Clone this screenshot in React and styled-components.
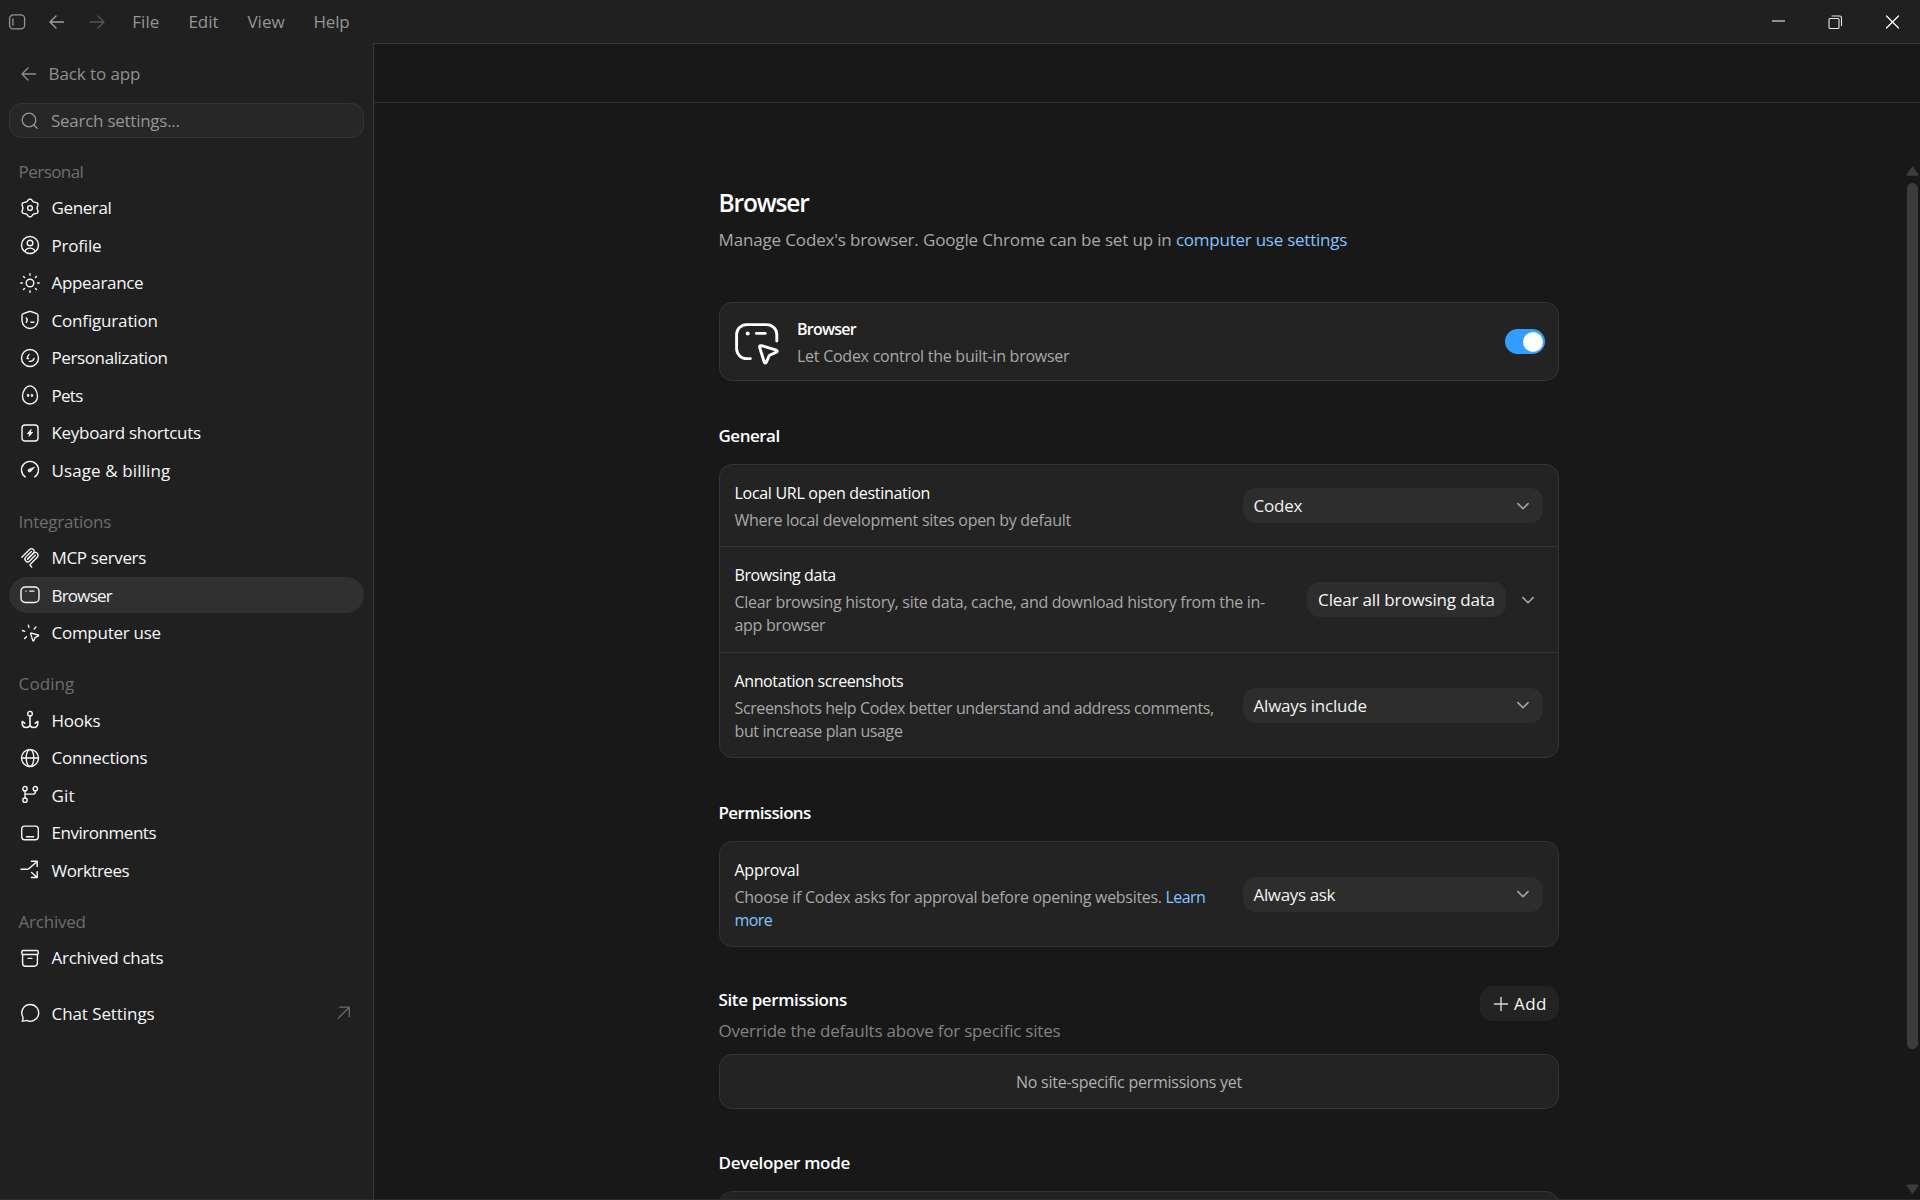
import React from "react";
import styled, { createGlobalStyle } from "styled-components";

const GlobalStyle = createGlobalStyle`
  *, *::before, *::after { box-sizing: border-box; }
  body { margin: 0; background: #202020; overflow: hidden; }
  button, input { font: inherit; color: inherit; }
`;

/* ---------- window shell ---------- */

const Window = styled.div`
  display: flex;
  flex-direction: column;
  width: 1920px;
  height: 1200px;
  overflow: hidden;
  background: #202020;
  border-bottom: 1px solid #2b2b2b;
  color: #f7f7f7;
  font-family: "Open Sans", "Noto Sans", sans-serif;
  font-size: 17px;
  line-height: 26px;
  font-kerning: normal;
`;

const TitleBar = styled.header`
  display: flex;
  flex: none;
  align-items: center;
  height: 43px;
  padding-left: 7px;
  color: #959595;
`;

const NavIcons = styled.div`
  display: flex;
  gap: 20px;
  padding-top: 1px;
`;

const Menu = styled.nav`
  display: flex;
  gap: 28.9px;
  padding: 1px 0 0 25.2px;
`;

const MenuItem = styled.span`
  letter-spacing: ${(p) => p.$ls || 0}px;
`;

const WindowControls = styled.div`
  display: flex;
  margin-left: auto;
`;

const ControlButton = styled.span`
  display: flex;
  align-items: center;
  justify-content: center;
  width: 57px;
  height: 43px;
`;

const Body = styled.div`
  display: flex;
  flex: 1;
  min-height: 0;
`;

const Svg = styled.svg`
  display: block;
  flex: none;
  overflow: visible;
  fill: none;
  stroke: ${(p) => p.$color || "currentColor"};
  stroke-width: ${(p) => p.$w || 1.4};
  stroke-linecap: round;
  stroke-linejoin: round;
`;

/* ---------- sidebar ---------- */

const Sidebar = styled.aside`
  flex: none;
  width: 373px;
  padding: 16px 9px 0;
`;

const BackLink = styled.div`
  display: flex;
  align-items: center;
  gap: 9.6px;
  height: 29px;
  padding-left: 10px;
  margin-bottom: 15px;
  color: #8f8f8f;
  letter-spacing: -0.1px;
`;

const SearchBox = styled.div`
  display: flex;
  align-items: center;
  gap: 11px;
  height: 35px;
  padding-left: 10px;
  border: 1px solid #353535;
  border-radius: 12.5px;
  background: #272727;
  color: #959595;
  letter-spacing: -0.26px;
`;

const GroupLabel = styled.div`
  display: flex;
  align-items: flex-end;
  height: 51.5px;
  padding: 0 0 6px 9.6px;
  color: #6d6d6d;
  line-height: 24px;
  letter-spacing: ${(p) => p.$ls || 0}px;
`;

const Group = styled.div`
  display: flex;
  flex-direction: column;
  gap: 1.5px;
`;

const Item = styled.div`
  display: flex;
  align-items: center;
  gap: 11.5px;
  height: 36px;
  padding: 0 13px 0 11px;
  margin-top: ${(p) => p.$top || 0}px;
  border-radius: 18px;
  background: ${(p) => (p.$active ? "#303030" : "transparent")};
`;

const ItemText = styled.span`
  flex: 1;
  padding-top: 1px;
  letter-spacing: ${(p) => p.$ls || 0}px;
`;

/* ---------- main panel ---------- */

const Main = styled.main`
  display: flex;
  flex: 1;
  flex-direction: column;
  min-width: 0;
  border: solid #383838;
  border-width: 1px 0 0 1px;
  background: #181818;
`;

const MainHeader = styled.div`
  flex: none;
  height: 59px;
  border-bottom: 1px solid #323232;
`;

const Scroll = styled.div`
  display: flex;
  flex: 1;
  min-height: 0;
`;

const Content = styled.div`
  flex: 1;
  min-width: 0;
  padding-top: 83px;
  overflow: hidden;
`;

const Column = styled.div`
  display: flex;
  flex-direction: column;
  width: 840px;
  margin: 0 auto;
`;

const ScrollTrack = styled.div`
  display: flex;
  flex: none;
  flex-direction: column;
  align-items: center;
  width: 16px;
  padding: 63px 0 5px 1px;
`;

const Thumb = styled.div`
  width: 11px;
  height: 866px;
  margin: 7px 0 auto;
  border-radius: 6px;
  background: #3c3c3c;
`;

const PageTitle = styled.h1`
  margin: 0 0 0 -0.5px;
  font-size: 24.5px;
  font-weight: 600;
  line-height: 34px;
  letter-spacing: -1.15px;
  color: #fff;
`;

const PageIntro = styled.p`
  margin: 7px 0 49px -0.5px;
  color: #a8a8a8;
  letter-spacing: -0.15px;
`;

const Link = styled.a`
  color: #83c3ff;
  letter-spacing: ${(p) => (p.$ls === undefined ? "inherit" : p.$ls + "px")};
`;

const Heading = styled.h2`
  margin: ${(p) => (p.$top === undefined ? 41.5 : p.$top)}px 0 ${(p) => (p.$bottom === undefined ? 15.5 : p.$bottom)}px -0.5px;
  font-size: 17px;
  font-weight: 600;
  line-height: 26px;
  letter-spacing: ${(p) => p.$ls || 0}px;
  color: #fff;
`;

const Card = styled.section`
  flex: none;
  border: 1px solid #343434;
  border-radius: 13px;
  background: #232323;
`;

const Row = styled.div`
  display: flex;
  box-sizing: content-box;
  align-items: center;
  justify-content: space-between;
  height: ${(p) => p.$h}px;
  padding: 0 ${(p) => (p.$right === undefined ? 15 : p.$right)}px 0 14.5px;
  &:not(:first-child) {
    border-top: 1px solid #343434;
  }
`;

const RowText = styled.div`
  align-self: flex-start;
  width: ${(p) => p.$w || 488}px;
  padding-top: 16.5px;
`;

const RowTitle = styled.div`
  font-size: 16px;
  font-weight: ${(p) => (p.$bold ? 600 : 400)};
  line-height: 22px;
  letter-spacing: ${(p) => p.$ls || 0}px;
  color: #fff;
`;

const RowDesc = styled.div`
  margin-top: 5px;
  font-size: 16px;
  line-height: 23px;
  letter-spacing: ${(p) => p.$ls || 0}px;
  color: #a8a8a8;
`;

const Feature = styled.div`
  display: flex;
  align-items: center;
  height: 77px;
  padding: 0 13px 0 15px;
`;

const FeatureText = styled.div`
  flex: 1;
  padding: 2px 0 0 17px;
`;

const FeatureIcon = styled.span`
  padding-top: 4px;
`;

const Toggle = styled.span`
  display: flex;
  align-items: center;
  justify-content: flex-end;
  width: 40px;
  height: 25px;
  padding-right: 2.5px;
  border-radius: 13px;
  background: #339cff;
  &::after {
    content: "";
    width: 20px;
    height: 20px;
    border-radius: 50%;
    background: #fff;
  }
`;

const SelectBox = styled.div`
  display: flex;
  align-items: center;
  justify-content: space-between;
  width: 300px;
  height: 35px;
  padding: 0 14px 0 10.5px;
  border-radius: 12.5px;
  background: #2d2d2d;
  color: #f2f2f2;
  letter-spacing: ${(p) => p.$ls || 0}px;
`;

const SplitButton = styled.div`
  display: flex;
  align-items: center;
  gap: 16px;
`;

const Button = styled.div`
  display: flex;
  align-items: center;
  justify-content: center;
  gap: 6px;
  width: ${(p) => p.$w}px;
  height: 35px;
  border-radius: 12.5px;
  background: ${(p) => p.$bg || "#2d2d2d"};
  letter-spacing: ${(p) => p.$ls || 0}px;
`;

const ButtonText = styled.span`
  padding-top: 1px;
`;

const SiteHeader = styled.div`
  display: flex;
  align-items: flex-start;
  justify-content: space-between;
  height: 68px;
  margin-top: 39px;
`;

const SiteHint = styled.div`
  margin: 4.5px 0 0 -0.5px;
  color: #828282;
  letter-spacing: -0.212px;
`;

const Empty = styled.div`
  display: flex;
  align-items: center;
  justify-content: center;
  height: 53px;
  padding: 1px 20px 0 0;
  font-size: 16px;
  letter-spacing: -0.25px;
  color: #b0b0b0;
`;

/* ---------- icons ---------- */

const gearOutline = (() => {
  const pts = [];
  for (let i = 0; i < 72; i++) {
    const a = (i / 72) * Math.PI * 2;
    const r = 7.95 + 0.95 * Math.cos(6 * (a + Math.PI / 2));
    pts.push(`${(10 + r * Math.cos(a)).toFixed(2)} ${(10 + r * Math.sin(a)).toFixed(2)}`);
  }
  return `M${pts.join("L")}Z`;
})();

const glyphs = {
  general: (<><path d={gearOutline} /><circle cx="10" cy="10" r="2.4" /></>),
  profile: (<><circle cx="10" cy="10" r="8.5" /><circle cx="10" cy="8" r="2.8" /><path d="M4.9 16.4c.9-2.2 2.8-3.3 5.1-3.3s4.2 1.1 5.1 3.3" /></>),
  appearance: (<><circle cx="10" cy="10" r="3.8" /><path d="M10 .8v1.5M10 17.7v1.5M.8 10h1.5M17.7 10h1.5M3.5 3.5l1.05 1.05M15.45 15.45l1.05 1.05M3.5 16.5l1.05-1.05M15.45 4.55l1.05-1.05" /></>),
  configuration: (<><path d="M9.3 1.5a2 2 0 0 1 1.4 0l6 2.2q1.3.5 1.3 1.9V10c0 5-3.7 8.5-8 8.5S2 15 2 10V5.6q0-1.4 1.3-1.9z" /><path d="M6.3 7.9q1.9 1.9 0 4.3M10.9 12.2h3" /></>),
  personalization: (<><circle cx="10" cy="10" r="8.5" /><path d="M9.1 6.4Q7.3 8.4 7.1 10.5H8.6M9.3 13.4Q12.9 13.5 14.1 10.4" /></>),
  pets: (<><path d="M10 .9c4 0 7.5 5.4 7.5 10.3 0 4.6-3.2 7.8-7.5 7.8s-7.5-3.2-7.5-7.8C2.5 6.3 6 .9 10 .9z" /><ellipse cx="8.05" cy="10.4" rx=".7" ry="1.4" fill="currentColor" strokeWidth=".8" /><ellipse cx="11.95" cy="10.4" rx=".7" ry="1.4" fill="currentColor" strokeWidth=".8" /></>),
  keyboard: (<><rect x="2" y="2" width="16" height="16" rx="3" /><path d="M11 6.6 7.3 10.7h2.2L9 13.4l3.7-4.1h-2.2z" fill="currentColor" strokeWidth=".8" /></>),
  usage: (<><path d="M5.2 16.9A8.5 8.5 0 1 1 14.8 16.9" /><path d="M14.3 7.3 9.4 8.9a1.6 1.6 0 1 0 1.5 2.5z" fill="currentColor" strokeWidth=".7" /></>),
  browser: (<><rect x="1" y="2" width="18" height="15.5" rx="4.3" /><path d="M5.9 6.1h.2M9.7 6.1h4.3" /></>),
  computer: (<><path d="M10.7 10.9q-.3-1.1.8-.8l6.6 1.9q1 .5.1 1l-2.9 1.3-1.5 3.2q-.6.9-1.1-.1z" /><path d="M8.3 2.1l.7 2.3M16 3.9l-1.9 2.2M2.4 7.5l2.3.8M6.5 13.7l-1.9 1.9" /></>),
  hooks: (<><circle cx="10" cy="3.7" r="2.3" /><path d="M10 6V15M4.7 13.2 2.2 11.5V13.3C2.2 16 4 17.5 6.2 17.5S10 16.3 10 14.6C10 16.3 11.6 17.5 13.8 17.5S17.8 16 17.8 13.3V11.5L15.3 13.2" strokeWidth="1.6" /></>),
  connections: (<><circle cx="10" cy="10" r="8.5" /><ellipse cx="10" cy="10" rx="3.8" ry="8.5" /><path d="M1.5 10h17" /></>),
  git: (<><circle cx="5" cy="3.7" r="2.15" /><circle cx="15.3" cy="3.7" r="2.15" /><circle cx="5" cy="15.2" r="2.15" /><path d="M5 5.9v7.1M15.3 5.9v1.2q0 2-2 2H5" /></>),
  environments: (<><rect x="1.7" y="3.1" width="16.6" height="13.6" rx="2.9" /><path d="M6.4 13.8h7.2" /></>),
  worktrees: (<path d="M1 9.2H7.6q.9 0 1.5-.6L17.1 1.4M11.4 1.2H17.2V6.6M11.6 12.4l5.3 4.9M11.4 17.5H17.2V11.6" />),
  archive: (<><rect x="1.8" y="2.5" width="16.4" height="4" rx="1.2" /><path d="M2.6 6.5V15.2a3 3 0 0 0 3 3h8.8a3 3 0 0 0 3-3V6.5M8.1 10.4h3.8" /></>),
  chat: (<path d="M10.3 1.5a8.4 8.4 0 1 1-3.7 15.95Q4.8 18.4 2.2 18.1 3.2 16.6 2.9 14A8.4 8.4 0 0 1 10.3 1.5z" />),
  search: (<><circle cx="9" cy="9" r="6.8" /><path d="M13.9 14l3.3 3.3" /></>),
};

const Icon = ({ name, color, w }) =>
  name === "mcp" ? (
    <Svg width="20" height="20" viewBox="2 4 176 176" $w={12}>
      <path d="M18 84.853 85.882 16.971c9.373-9.373 24.569-9.373 33.941 0 9.373 9.372 9.373 24.568 0 33.941L68.558 102.177" />
      <path d="M69.265 101.47 119.823 50.912c9.373-9.373 24.569-9.373 33.942 0l.353.353c9.373 9.373 9.373 24.569 0 33.941L92.725 146.6c-3.124 3.124-3.124 8.189 0 11.313l12.606 12.607" />
      <path d="M102.853 33.941 52.648 84.146c-9.372 9.372-9.372 24.568 0 33.941 9.373 9.372 24.569 9.372 33.941 0L136.794 67.882" />
    </Svg>
  ) : (
    <Svg width="20" height="20" viewBox="0 0 20 20" $color={color} $w={w}>
      {glyphs[name]}
    </Svg>
  );

const ArrowLeft = ({ color }) => (
  <Svg width="20" height="20" viewBox="0 0 20 20" $color={color} $w={1.3}>
    <path d="M16.6 10H3.2M9 4 3 10l6 6" />
  </Svg>
);

const ArrowRight = ({ color }) => (
  <Svg width="20" height="20" viewBox="0 0 20 20" $color={color} $w={1.3}>
    <path d="M3.4 10h13.4M11 4l6 6-6 6" />
  </Svg>
);

const Chevron = () => (
  <Svg width="12" height="12" viewBox="0 0 12 12" $color="#a6a6a6" $w={1.6}>
    <path d="M.9 3.6 6 8.7l5.1-5.1" />
  </Svg>
);

const BrowserControlIcon = () => (
  <Svg width="45" height="42" viewBox="0 0 45 42" $color="#fff" $w={2.9}>
    <path d="M41.8 18V11.6a10 10 0 0 0-10-10H11.6a10 10 0 0 0-10 10v14a10 10 0 0 0 10 10h3.8" />
    <path d="M12.7 10.4h.01" strokeWidth="4" />
    <path d="M21.4 10.4h8.8" />
    <path d="M24.7 24.5q-.4-2.3 1.8-1.8l14.9 4.5q1.7.9.1 1.9l-6.4 2.9q-.8.4-1.1 1.2l-2.6 5.9q-1.3 1.9-2.2-.1z" />
  </Svg>
);

/* ---------- data ---------- */

const groups = [
  {
    label: "Personal",
    ls: -0.56,
    items: [
      ["general", "General", -0.38],
      ["profile", "Profile", -0.2],
      ["appearance", "Appearance", -0.33],
      ["configuration", "Configuration", -0.17],
      ["personalization", "Personalization", -0.39],
      ["pets", "Pets", -0.7],
      ["keyboard", "Keyboard shortcuts", -0.31],
      ["usage", "Usage & billing", 0.11],
    ],
  },
  {
    label: "Integrations",
    ls: -0.26,
    items: [
      ["mcp", "MCP servers", -0.35],
      ["browser", "Browser", -0.8],
      ["computer", "Computer use", -0.27],
    ],
  },
  {
    label: "Coding",
    ls: 0.09,
    items: [
      ["hooks", "Hooks", -0.23],
      ["connections", "Connections", -0.25],
      ["git", "Git", 0.17],
      ["environments", "Environments", -0.46],
      ["worktrees", "Worktrees", -0.49],
    ],
  },
  { label: "Archived", ls: -0.23, items: [["archive", "Archived chats", -0.27]] },
];

const Select = ({ children, ls }) => (
  <SelectBox $ls={ls}>
    <ButtonText>{children}</ButtonText>
    <Chevron />
  </SelectBox>
);

export default function App() {
  return (
    <Window>
      <GlobalStyle />
      <TitleBar>
        <NavIcons>
          <Svg width="20" height="20" viewBox="0 0 20 20" $w={1.3}>
            <rect x="2.6" y="2.9" width="15" height="14" rx="3.7" />
            <path d="M5.9 6.8v6.2" />
          </Svg>
          <ArrowLeft color="#a0a0a0" />
          <ArrowRight color="#555" />
        </NavIcons>
        <Menu>
          <MenuItem $ls={0.1}>File</MenuItem>
          <MenuItem>Edit</MenuItem>
          <MenuItem>View</MenuItem>
          <MenuItem $ls={-0.22}>Help</MenuItem>
        </Menu>
        <WindowControls>
          <ControlButton>
            <Svg width="14" height="14" viewBox="0 0 14 14" $color="#fff" $w={1}>
              <path d="M1.5 6h12" strokeLinecap="square" />
            </Svg>
          </ControlButton>
          <ControlButton>
            <Svg width="14" height="14" viewBox="0 0 14 14" $color="#e8e8e8" $w={1.1}>
              <rect x="1" y="3.5" width="10" height="10" rx="1" />
              <path d="M4 1H11.5a2 2 0 0 1 2 2V10.5" />
            </Svg>
          </ControlButton>
          <ControlButton>
            <Svg width="14" height="14" viewBox="0 0 14 14" $color="#fff" $w={1.2}>
              <path d="M1.5 1l12 12M13.5 1l-12 12" />
            </Svg>
          </ControlButton>
        </WindowControls>
      </TitleBar>

      <Body>
        <Sidebar>
          <BackLink>
            <ArrowLeft />
            Back to app
          </BackLink>
          <SearchBox>
            <Icon name="search" w={1.3} />
            Search settings...
          </SearchBox>
          {groups.map((g) => (
            <React.Fragment key={g.label}>
              <GroupLabel $ls={g.ls}>{g.label}</GroupLabel>
              <Group>
                {g.items.map(([icon, text, ls]) => (
                  <Item key={icon} $active={icon === "browser"}>
                    <Icon name={icon} />
                    <ItemText $ls={ls}>{text}</ItemText>
                  </Item>
                ))}
              </Group>
            </React.Fragment>
          ))}
          <Item $top={19.5}>
            <Icon name="chat" />
            <ItemText $ls={-0.08}>Chat Settings</ItemText>
            <Svg width="14" height="14" viewBox="0 0 14 14" $color="#6a6a6a" $w={1.3}>
              <path d="M1.5 12 12.3 1.2M2.8 1.2h9.5v9.3" />
            </Svg>
          </Item>
        </Sidebar>

        <Main>
          <MainHeader />
          <Scroll>
            <Content>
              <Column>
                <PageTitle>Browser</PageTitle>
                <PageIntro>
                  Manage Codex's browser. Google Chrome can be set up in{" "}
                  <Link $ls={-0.24}>computer use settings</Link>
                </PageIntro>

                <Card>
                  <Feature>
                    <FeatureIcon>
                      <BrowserControlIcon />
                    </FeatureIcon>
                    <FeatureText>
                      <RowTitle $bold $ls={-0.75}>Browser</RowTitle>
                      <RowDesc $ls={-0.257}>Let Codex control the built-in browser</RowDesc>
                    </FeatureText>
                    <Toggle />
                  </Feature>
                </Card>

                <Heading $ls={-0.49}>General</Heading>
                <Card>
                  <Row $h={81}>
                    <RowText>
                      <RowTitle $ls={-0.29}>Local URL open destination</RowTitle>
                      <RowDesc $ls={-0.289}>Where local development sites open by default</RowDesc>
                    </RowText>
                    <Select ls={-0.22}>Codex</Select>
                  </Row>
                  <Row $h={105} $right={24}>
                    <RowText $w={552}>
                      <RowTitle $ls={-0.4}>Browsing data</RowTitle>
                      <RowDesc $ls={-0.3}>
                        Clear browsing history, site data, cache, and download history from the in-app browser
                      </RowDesc>
                    </RowText>
                    <SplitButton>
                      <Button $w={199} $ls={-0.156}>
                        <ButtonText>Clear all browsing data</ButtonText>
                      </Button>
                      <Chevron />
                    </SplitButton>
                  </Row>
                  <Row $h={104}>
                    <RowText>
                      <RowTitle $ls={-0.389}>Annotation screenshots</RowTitle>
                      <RowDesc $ls={-0.385}>
                        Screenshots help Codex better understand and address comments, but increase plan usage
                      </RowDesc>
                    </RowText>
                    <Select ls={-0.206}>Always include</Select>
                  </Row>
                </Card>

                <Heading $ls={-0.65}>Permissions</Heading>
                <Card>
                  <Row $h={104}>
                    <RowText>
                      <RowTitle $ls={-0.249}>Approval</RowTitle>
                      <RowDesc $ls={-0.295}>
                        Choose if Codex asks for approval before opening websites.{" "}
                        <Link $ls={-0.6}>
                          <span>Learn</span> <span>more</span>
                        </Link>
                      </RowDesc>
                    </RowText>
                    <Select ls={-0.36}>Always ask</Select>
                  </Row>
                </Card>

                <SiteHeader>
                  <div>
                    <Heading $top={1} $bottom={0} $ls={-0.378}>Site permissions</Heading>
                    <SiteHint>Override the defaults above for specific sites</SiteHint>
                  </div>
                  <Button $w={79} $bg="#232323" $ls={0.4}>
                    <Svg width="16" height="16" viewBox="0 0 16 16" $color="#d8d8d8" $w={1.4}>
                      <path d="M9 1.5v13M2.500 8h13" />
                    </Svg>
                    <ButtonText>Add</ButtonText>
                  </Button>
                </SiteHeader>
                <Card>
                  <Empty>No site-specific permissions yet</Empty>
                </Card>

                <Heading $top={40.5} $ls={-0.274}>Developer mode</Heading>
                <Card>
                  <Row $h={81} />
                </Card>
              </Column>
            </Content>
            <ScrollTrack>
              <Svg width="13" height="10" viewBox="0 0 13 10" $color="#3c3c3c" $w={2}>
                <path d="M6.5 1.5 11.5 8.700h-10z" fill="#3c3c3c" />
              </Svg>
              <Thumb />
              <Svg width="13" height="10" viewBox="0 0 13 10" $color="#3c3c3c" $w={2}>
                <path d="M6.5 8.700 11.5 1.500h-10z" fill="#3c3c3c" />
              </Svg>
            </ScrollTrack>
          </Scroll>
        </Main>
      </Body>
    </Window>
  );
}
